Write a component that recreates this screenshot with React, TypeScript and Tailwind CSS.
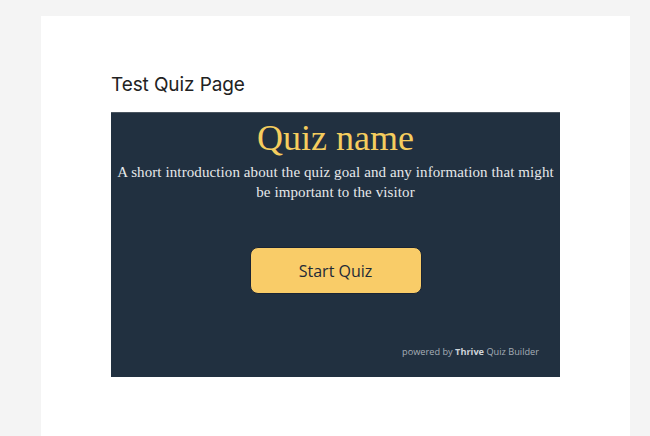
export default function App() {
  return (
    <div className="min-h-[436px] bg-[#f4f4f4] pl-[41px] pt-4">
      <div className="h-[420px] w-[589px] bg-white px-[70px] pt-[55px]">
        <h1 className="font-['Inter',sans-serif] text-[19px] leading-[28px] tracking-[-0.1px] text-[#222]">
          Test Quiz Page
        </h1>
        <div className="mt-[13px] flex h-[265px] w-[449px] flex-col items-center border-t border-[#4a5560] bg-[#213040]">
          <h2 className="mt-[4px] font-['Liberation_Serif',serif] text-[36px] leading-[42px] text-[#f5cd5e]">
            Quiz name
          </h2>
          <p className="mt-[3px] whitespace-nowrap text-center font-['Liberation_Serif',serif] text-[15px] leading-[20px] tracking-[0.1px] text-[#e6e8ea]">
            A short introduction about the quiz goal and any information that might
            <br />
            be important to the visitor
          </p>
          <button className="mt-[45px] h-[47px] w-[172px] rounded-[8px] border border-[#1a2433] bg-[#f9cc68] font-['Open_Sans',sans-serif] text-[16px] text-[#1f2a37]">
            Start Quiz
          </button>
          <div className="mt-auto mb-[18px] self-end pr-[21px] font-['Open_Sans',sans-serif] text-[9.2px] text-[#a6aeb7]">
            powered by <span className="font-bold text-[#cfd4d9]">Thrive</span> Quiz Builder
          </div>
        </div>
      </div>
    </div>
  );
}
